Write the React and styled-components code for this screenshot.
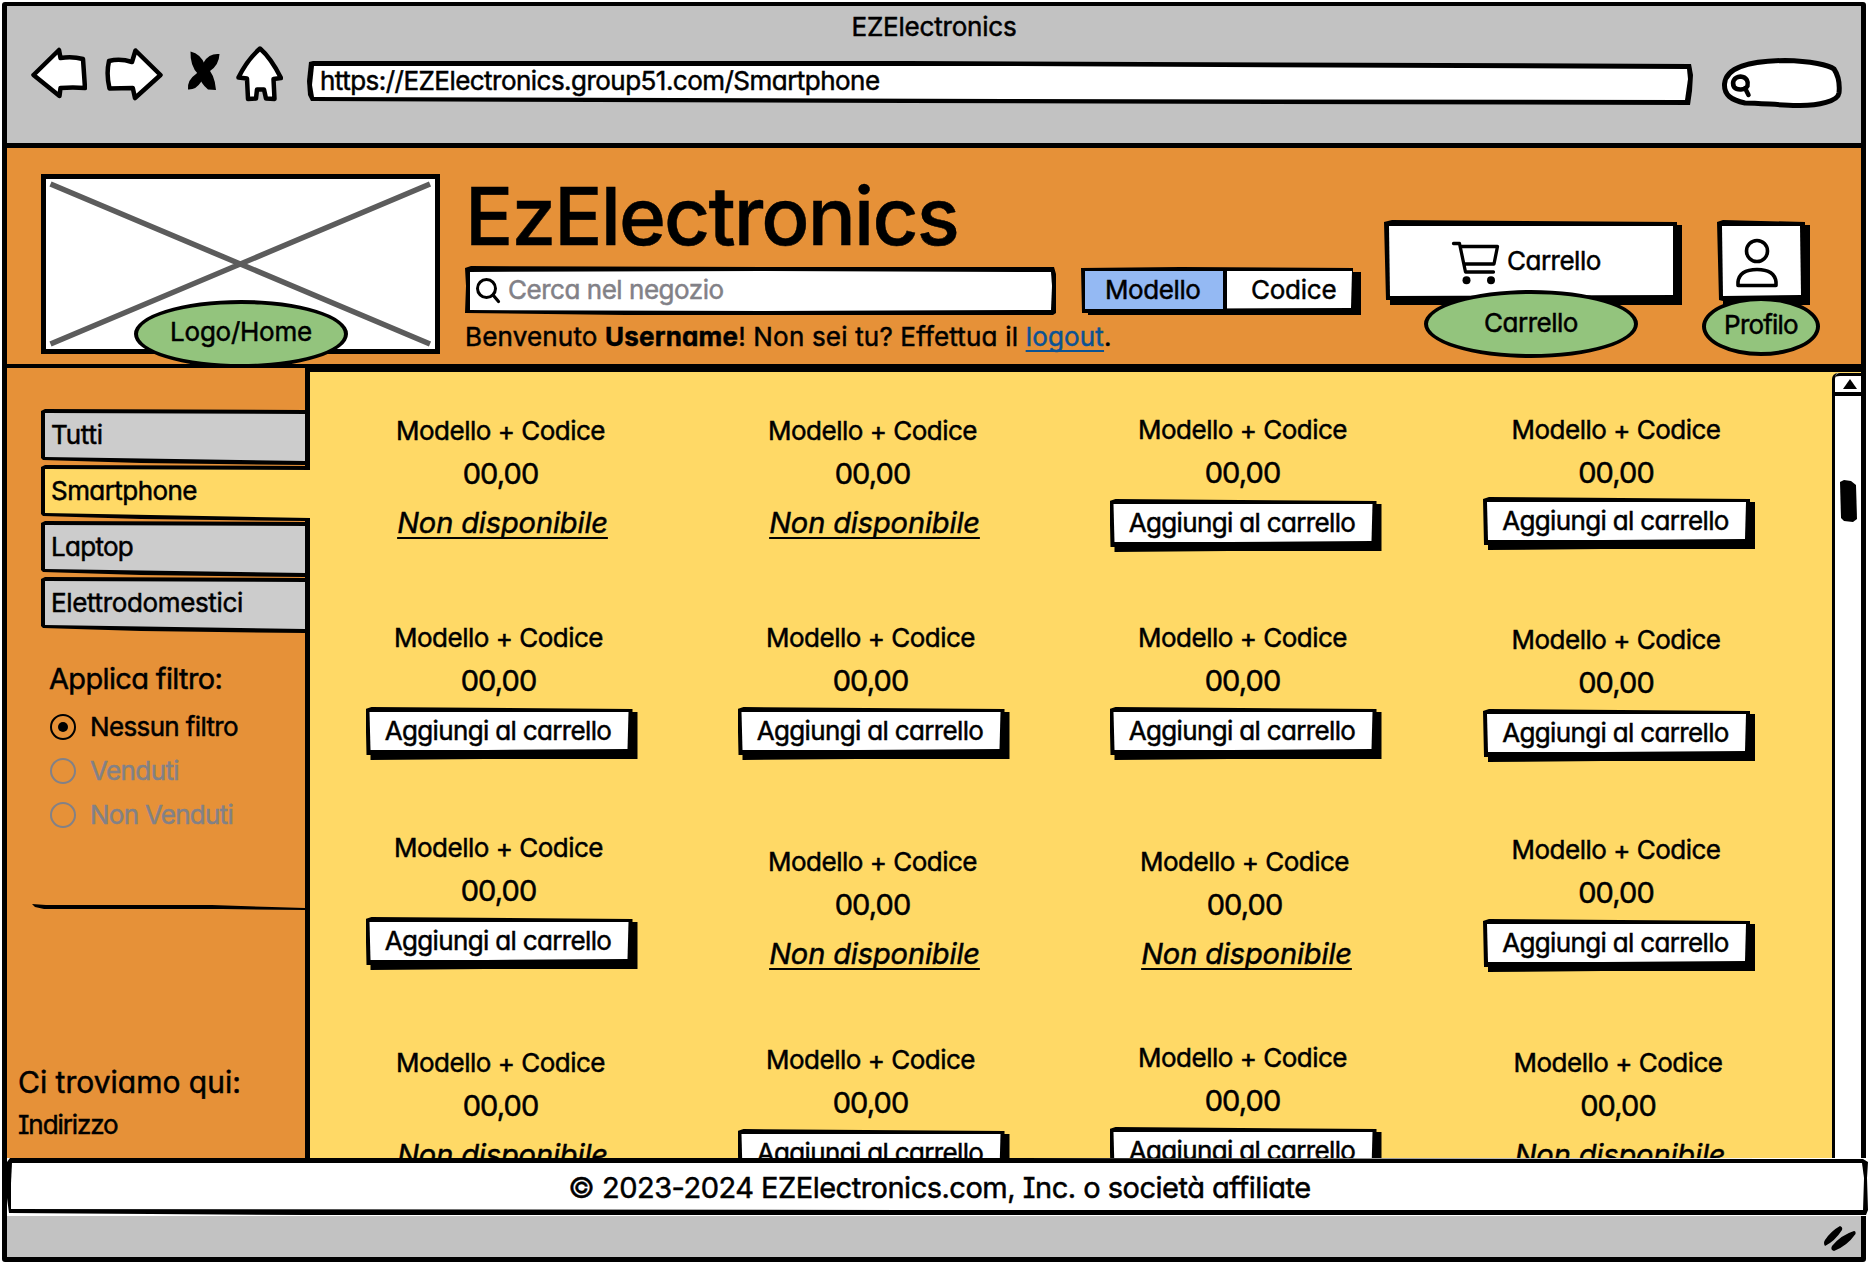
import React from "react";
import styled, { createGlobalStyle, css } from "styled-components";

const ink = "#000";
const orange = "#e69138";
const yellow = "#ffd966";
const green = "#93c47d";
const muted = "#828187";

const GlobalStyle = createGlobalStyle`
  * { box-sizing: border-box; }
  html, body { margin: 0; padding: 0; background: #fff; }
  body {
    font-family: Inter, Lato, "Liberation Sans", sans-serif;
    font-feature-settings: "cv08", "cv11";
    font-size: 26px;
    line-height: 32px;
    color: ${ink};
    overflow: hidden;
  }
`;

/* Hand-drawn box: an ink outline with a filled, slightly skewed face on top. */
const sketch = (outer, inner, fill) => css`
  position: relative;
  z-index: 0;
  &::before, &::after {
    content: "";
    position: absolute;
    inset: 0;
    z-index: -1;
  }
  &::before { background: ${ink}; clip-path: polygon(${outer}); }
  &::after { background: ${fill}; clip-path: polygon(${inner}); }
`;

const Text = styled.span`
  white-space: nowrap;
  letter-spacing: ${(p) => p.$ls || 0}px;
  -webkit-text-stroke: 0.5px currentColor;
`;

const Window = styled.div`
  width: 1864px;
  height: 1260px;
  margin: 2px;
  border: solid ${ink};
  border-width: 4px 5px 5px;
  border-radius: 3px;
  display: flex;
  flex-direction: column;
`;

const Chrome = styled.div`
  height: 142px;
  flex: none;
  background: #c2c2c2;
  border-bottom: 5px solid ${ink};
`;
const ChromeTitle = styled.div`
  padding-top: 5px;
  height: 40px;
  text-align: center;
`;
const ChromeRow = styled.div`
  display: flex;
  align-items: flex-start;
  padding-left: 24px;
`;
const Glyph = styled.svg`
  display: block;
  flex: none;
  margin-left: ${(p) => p.$gap || 0}px;
  margin-top: ${(p) => p.$drop || 0}px;
`;
const UrlBar = styled.div`
  ${sketch(
    "2px 1px, 6px 0, 600px 0, 1384px 3px, 1386px 14px, 1385px 30px, 1383px 44px, 600px 42px, 4px 40px, 1px 34px, 0 20px",
    "7px 5px, 700px 5px, 1380px 8px, 1381px 18px, 1378px 39px, 700px 38px, 7px 36px, 5px 24px",
    "#fff"
  )}
  width: 1386px;
  height: 45px;
  margin: 15px 0 0 24px;
  padding: 4px 0 0 13px;
`;

const Header = styled.header`
  height: 220px;
  flex: none;
  background: ${orange};
  border-bottom: 4px solid ${ink};
  display: flex;
  align-items: flex-start;
  padding-left: 34px;
`;
const LogoBox = styled.div`
  position: relative;
  width: 399px;
  height: 180px;
  margin-top: 26px;
  background: #fff;
  border: 5px solid ${ink};
  flex: none;
`;
const Bubble = styled.div`
  position: absolute;
  left: ${(p) => p.$x}px;
  top: ${(p) => p.$y}px;
  width: ${(p) => p.$w}px;
  height: ${(p) => p.$h}px;
  background: ${green};
  border: 4px solid ${ink};
  border-radius: 50%;
  display: flex;
  align-items: center;
  justify-content: center;
  padding-bottom: ${(p) => p.$lift || 0}px;
  z-index: 3;
`;
const HeaderCenter = styled.div`
  width: 897px;
  margin-left: 25px;
  padding-top: 28px;
  flex: none;
`;
const Brand = styled.h1`
  margin: 0;
  font-size: 80px;
  line-height: 80px;
  font-weight: 500;
`;
const SearchRow = styled.div`
  display: flex;
  margin-top: 10px;
`;
const SearchField = styled.div`
  ${sketch(
    "0 2px, 6px 0, 300px 1px, 589px 1px, 591px 8px, 591px 47px, 588px 49px, 300px 49px, 160px 49px, 0 47px, 1px 20px",
    "5px 6px, 300px 5px, 586px 6px, 587px 20px, 586px 44px, 300px 45px, 5px 44px",
    "#fff"
  )}
  width: 591px;
  height: 50px;
  display: flex;
  color: ${muted};
  padding-left: 9px;
`;
const SearchText = styled.div`
  padding: 8px 0 0 4px;
`;
const Toggle = styled.div`
  ${sketch(
    "0 1px, 100px 0, 272px 1px, 272px 5px, 280px 5px, 280px 48px, 7px 48px, 7px 46px, 1px 46px",
    "4px 4px, 271px 4px, 270px 41px, 4px 42px",
    "#fff"
  )}
  width: 280px;
  height: 48px;
  margin: 1px 0 0 25px;
  display: flex;
`;
const ToggleOption = styled.div`
  width: ${(p) => p.$w}px;
  height: 38px;
  margin: 4px 0 0 ${(p) => (p.$on ? 4 : 0)}px;
  padding-top: 3px;
  padding-left: ${(p) => p.$pad}px;
  background: ${(p) => (p.$on ? "#94b9f3" : "transparent")};
  border-right: ${(p) => (p.$on ? "4px solid #000" : "0")};
`;
const Welcome = styled.div`
  margin-top: 5px;
`;
const Logout = styled.a`
  color: #0b5394;
  text-decoration: underline;
  text-decoration-thickness: 2px;
  text-underline-offset: 4px;
  text-decoration-skip-ink: none;
`;
const CartButton = styled.div`
  ${sketch(
    "0 2px, 8px 0, 293px 2px, 293px 5px, 298px 5px, 298px 85px, 6px 85px, 6px 80px, 2px 80px",
    "5px 6px, 289px 6px, 289px 75px, 6px 76px",
    "#fff"
  )}
  width: 298px;
  height: 85px;
  margin: 72px 0 0 22px;
  padding: 21px 0 0 67px;
  display: flex;
  flex: none;
`;
const CartLabel = styled.div`
  padding: 4px 0 0 6px;
`;
const ProfileButton = styled.div`
  ${sketch(
    "0 2px, 6px 0, 88px 2px, 88px 5px, 93px 5px, 93px 85px, 6px 85px, 6px 81px, 2px 80px",
    "5px 6px, 83px 6px, 84px 75px, 6px 76px",
    "#fff"
  )}
  width: 93px;
  height: 85px;
  margin: 72px 0 0 35px;
  padding: 18px 0 0 18px;
  flex: none;
`;

const Main = styled.div`
  height: 790px;
  flex: none;
  display: flex;
  background: ${orange};
`;
const Sidebar = styled.aside`
  width: 298px;
  flex: none;
  padding-top: 41px;
`;
const Tab = styled.div`
  ${(p) =>
    p.$active
      ? sketch(
          "0 2px, 4px 0, 268px 1px, 268px 5px, 269px 5px, 269px 57px, 264px 56px, 100px 54px, 2px 51px, 0 49px",
          "4px 4px, 269px 5px, 269px 53px, 4px 48px",
          yellow
        )
      : sketch(
          "0 2px, 4px 0, 264px 1px, 264px 56px, 100px 54px, 2px 51px, 0 49px",
          "4px 4px, 264px 5px, 264px 52px, 4px 48px",
          "#ccc"
        )}
  width: ${(p) => (p.$active ? 269 : 264)}px;
  height: 56px;
  margin-left: 34px;
  padding: 10px 0 0 10px;
  z-index: ${(p) => (p.$active ? 1 : 0)};
`;
const FilterTitle = styled.div`
  margin: 28px 0 8px 42px;
  font-size: 29px;
  line-height: 36px;
`;
const RadioRow = styled.div`
  height: 44px;
  margin-left: 43px;
  display: flex;
  align-items: center;
  gap: 14px;
  color: ${(p) => (p.$off ? muted : ink)};
`;
const Radio = styled.span`
  width: 26px;
  height: 26px;
  border: 2.5px solid currentColor;
  border-radius: 50%;
  display: grid;
  place-items: center;
  &::after {
    content: "";
    width: 10px;
    height: 10px;
    border-radius: 50%;
    background: ${(p) => (p.$on ? "currentColor" : "transparent")};
  }
`;
const Rule = styled.div`
  height: 7px;
  margin: 67px 0 0 25px;
  background: ${ink};
  clip-path: polygon(0 0, 14px 1px, 180px 1px, 240px 3px, 273px 4px, 273px 6px, 190px 5px, 12px 5px, 3px 3px);
`;
const AddressTitle = styled.div`
  margin: 153px 0 0 11px;
  font-size: 30px;
  line-height: 36px;
`;
const Address = styled.div`
  margin: 9px 0 0 11px;
`;

const Content = styled.main`
  flex: 1;
  display: flex;
  background: ${yellow};
  border-top: 4px solid ${ink};
  border-left: 5px solid ${ink};
  overflow: hidden;
`;
const Grid = styled.div`
  width: 1522px;
  flex: none;
  padding: 42px 0 0 2px;
  display: grid;
  grid-template-columns: 373px 371px 373px 374px;
  grid-template-rows: 208px 210px 210px 210px;
`;
const Card = styled.div`
  display: flex;
  flex-direction: column;
  align-items: center;
  padding-top: ${(p) => p.$dy}px;
  padding-left: ${(p) => p.$dx * 2}px;
`;
const Price = styled.div`
  margin-top: 9px;
  font-size: 29px;
  line-height: 36px;
`;
const AddButton = styled.div`
  ${sketch(
    "0 2px, 6px 0, 267px 2px, 267px 5px, 272px 5px, 272px 52px, 120px 52px, 5px 53px, 5px 48px, 1px 48px",
    "4px 5px, 263px 5px, 262px 42px, 120px 43px, 5px 43px",
    "#fff"
  )}
  width: 272px;
  height: 53px;
  flex: none;
  margin: ${(p) => p.$top}px 0 0 6px;
  padding: 8px 7px 0 0;
  text-align: center;
`;
const Unavailable = styled.div`
  margin: 13px 0 0 4px;
  font-size: 29px;
  line-height: 36px;
  font-style: italic;
  text-decoration: underline;
  text-decoration-thickness: 2px;
  text-underline-offset: 4px;
  text-decoration-skip-ink: none;
`;
const Scrollbar = styled.div`
  width: 29px;
  margin-top: 1px;
  flex: none;
  background: #fff;
  border-left: 3px solid ${ink};
  border-top-left-radius: 6px;
`;
const ScrollUp = styled.div`
  height: 23px;
  border: solid ${ink};
  border-width: 3px 0 4px 0;
  border-top-left-radius: 5px;
  padding: 3px 0 0 7px;
`;
const Thumb = styled.div`
  width: 17px;
  height: 42px;
  margin: 84px 0 0 5px;
  background: ${ink};
  clip-path: polygon(0 2px, 4px 0, 11px 1px, 16px 5px, 17px 39px, 13px 42px, 4px 41px, 1px 38px);
`;

const Footer = styled.footer`
  ${sketch(
    "0 4px, 3px 0, 900px 0, 1856px 1px, 1861px 4px, 1860px 20px, 1861px 52px, 1859px 57px, 900px 57px, 300px 57px, 2px 55px, 0 40px",
    "5px 5px, 900px 5px, 1855px 5px, 1857px 20px, 1856px 52px, 900px 52px, 4px 51px, 4px 25px",
    "#fff"
  )}
  height: 58px;
  flex: none;
  margin-right: -7px;
  padding: 12px 0 0 4px;
  text-align: center;
  font-size: 29px;
  line-height: 36px;
  background: #fff;
`;
const StatusBar = styled.div`
  flex: 1;
  background: #c2c2c2;
  display: flex;
  justify-content: flex-end;
  padding: 9px 4px 0 0;
`;

const categories = [
  { name: "Tutti", ls: -0.2 },
  { name: "Smartphone", ls: -0.55 },
  { name: "Laptop", ls: -0.72 },
  { name: "Elettrodomestici", ls: -0.35 },
];
const filters = [
  { name: "Nessun filtro", ls: -0.64 },
  { name: "Venduti", ls: -0.6 },
  { name: "Non Venduti", ls: -0.74 },
];

/* Availability plus the horizontal and vertical jitter of each hand-placed card. */
const products = [
  { dx: 2, dy: 1 }, { dx: 2, dy: 1 }, { add: true }, { add: true, top: 6 },
  { add: true }, { add: true }, { add: true }, { add: true, dy: 2 },
  { add: true }, { dx: 2, dy: 14 }, { dx: 2, dy: 14 }, { add: true, dy: 2 },
  { dx: 2, dy: 5 }, { add: true, dy: 2 }, { add: true }, { dx: 2, dy: 5 },
];

const leaves = [
  "M190.500 51.500Q201 54 205 65Q215 74 216 90L208 89.500Q201 84 198 74Q190 66 190.500 51.500Z",
  "M219.500 54Q219 65 210 71Q206 76 201 82Q196 90 188 89.500Q187 80 196 74Q201 70 204 62Q209 53 219.500 54Z",
];

function Product({ item }) {
  return (
    <Card $dx={item.dx || 0} $dy={item.dy || 0}>
      <Text $ls={-0.5}>Modello + Codice</Text>
      <Price><Text $ls={-0.9}>00,00</Text></Price>
      {item.add ? (
        <AddButton $top={item.top || 8}><Text $ls={-0.65}>Aggiungi al carrello</Text></AddButton>
      ) : (
        <Unavailable><Text $ls={-0.12}>Non disponibile</Text></Unavailable>
      )}
    </Card>
  );
}

export default function App() {
  return (
    <>
      <GlobalStyle />
      <Window>
        <Chrome>
          <ChromeTitle><Text $ls={-0.2}>EZElectronics</Text></ChromeTitle>
          <ChromeRow>
            <Glyph width="56" height="56" viewBox="31 46 56 56">
              <path d="M33.500 75L59 50L60.500 58Q72 56 83 59Q84 73 85 88Q73 87 60.500 88L59.500 96Z" fill="#fff" stroke="#000" strokeWidth="4.500" strokeLinejoin="round" />
            </Glyph>
            <Glyph $gap={18} width="58" height="57" viewBox="105 46 58 57">
              <path d="M109 61Q120 58 132 62L135.500 50.500L160.500 75L135 98L132.800 88L109.500 88.500Q106 74 109 61Z" fill="#fff" stroke="#000" strokeWidth="4.500" strokeLinejoin="round" />
            </Glyph>
            <Glyph $gap={24} width="33" height="48" viewBox="187 46 33 48">
              {leaves.map((d) => <path key={d} d={d} />)}
            </Glyph>
            <Glyph $gap={16} width="47" height="57" viewBox="236 46 47 57">
              <path d="M260 48.500Q271 58 281 78L273.500 79Q274 89 274.500 99L266 98.500L264 89.500H257L256 98.500L248 99L247 78.500L238.500 77.500Q247 60 260 48.500Z" fill="#fff" stroke="#000" strokeWidth="4.500" strokeLinejoin="round" />
            </Glyph>
            <UrlBar><Text $ls={-0.53}>https://EZElectronics.group51.com/Smartphone</Text></UrlBar>
            <Glyph $gap={28} $drop={10} width="122" height="54" viewBox="1722 55 122 54">
              <path d="M1725.500 83C1727 66 1750 60 1786 59.500C1812 60 1830 64 1835 68C1839 74 1841 82 1840 92C1839 100 1820 105 1798 104.500C1778 104 1760 102 1746 102C1732 99 1725 94 1725.500 83Z" fill="#fff" stroke="#000" strokeWidth="5" />
              <path d="M1741.500 75.500C1748 76 1749.500 81 1748.500 85C1746 89.500 1738 89.500 1735 86C1732.500 81 1735 76 1741.500 75.500ZM1746 87L1749.500 94" fill="none" stroke="#000" strokeWidth="4.500" strokeLinecap="round" />
            </Glyph>
          </ChromeRow>
        </Chrome>

        <Header>
          <LogoBox>
            <svg width="389" height="170" viewBox="46 179 389 170" style={{ display: "block" }}>
              <path d="M50.500 184L430 344M430 184L50.500 344" stroke="#5c5c5c" strokeWidth="5.500" fill="none" />
            </svg>
            <Bubble $x={88} $y={121} $w={214} $h={68} $lift={4}><Text $ls={-0.25}>Logo/Home</Text></Bubble>
          </LogoBox>
          <HeaderCenter>
            <Brand><Text $ls={-1.85}>EzElectronics</Text></Brand>
            <SearchRow>
              <SearchField>
                <Glyph $drop={8} width="30" height="34" viewBox="474 274 30 34">
                  <ellipse cx="486.500" cy="288.500" rx="9" ry="9" fill="none" stroke="#000" strokeWidth="3" />
                  <path d="M493 295L498.500 301.500" stroke="#000" strokeWidth="3.200" strokeLinecap="round" />
                </Glyph>
                <SearchText><Text $ls={-0.47}>Cerca nel negozio</Text></SearchText>
              </SearchField>
              <Toggle>
                <ToggleOption $on $w={142} $pad={20}><Text $ls={-0.4}>Modello</Text></ToggleOption>
                <ToggleOption $w={126} $pad={24}><Text $ls={-0.25}>Codice</Text></ToggleOption>
              </Toggle>
            </SearchRow>
            <Welcome>
              <Text $ls={0.18}>Benvenuto <b>Username</b>! Non sei tu? Effettua il <Logout>logout</Logout>.</Text>
            </Welcome>
          </HeaderCenter>
          <CartButton>
            <Glyph width="50" height="46" viewBox="1450 241 50 46">
              <path d="M1452.500 243.500H1458.500L1464.500 272H1492.500M1459.500 246.500H1496.500L1493 264H1463" fill="none" stroke="#000" strokeWidth="3.300" strokeLinecap="round" strokeLinejoin="round" />
              <circle cx="1465.500" cy="280.300" r="4" /><circle cx="1490" cy="280.300" r="4" />
            </Glyph>
            <CartLabel><Text $ls={-0.5}>Carrello</Text></CartLabel>
            <Bubble $x={40} $y={70} $w={214} $h={68} $lift={3}><Text $ls={-0.5}>Carrello</Text></Bubble>
          </CartButton>
          <ProfileButton>
            <Glyph width="44" height="50" viewBox="1735 238 44 50">
              <ellipse cx="1757" cy="251" rx="10.500" ry="10.500" fill="none" stroke="#000" strokeWidth="3.600" />
              <path d="M1738 285.500V282C1739 273 1746 269.500 1757 269.500S1775 273 1776 282V285.500Z" fill="none" stroke="#000" strokeWidth="3.600" strokeLinejoin="round" />
            </Glyph>
            <Bubble $x={-15} $y={77} $w={118} $h={59} $lift={4}><Text $ls={-0.8}>Profilo</Text></Bubble>
          </ProfileButton>
        </Header>

        <Main>
          <Sidebar>
            {categories.map((c) => (
              <Tab key={c.name} $active={c.name === "Smartphone"}><Text $ls={c.ls}>{c.name}</Text></Tab>
            ))}
            <FilterTitle><Text $ls={-0.65}>Applica filtro:</Text></FilterTitle>
            {filters.map((f, i) => (
              <RadioRow key={f.name} $off={i > 0}>
                <Radio $on={i === 0} /><Text $ls={f.ls}>{f.name}</Text>
              </RadioRow>
            ))}
            <Rule />
            <AddressTitle><Text>Ci troviamo qui:</Text></AddressTitle>
            <Address><Text $ls={-1.1}>Indirizzo</Text></Address>
          </Sidebar>
          <Content>
            <Grid>
              {products.map((item, i) => <Product key={i} item={item} />)}
            </Grid>
            <Scrollbar>
              <ScrollUp>
                <svg width="16" height="11" viewBox="0 0 16 11" style={{ display: "block" }}><path d="M8 0L15 10H1Z" /></svg>
              </ScrollUp>
              <Thumb />
            </Scrollbar>
          </Content>
        </Main>

        <Footer><Text $ls={-0.5}>© 2023-2024 EZElectronics.com, Inc. o società affiliate</Text></Footer>
        <StatusBar>
          <svg width="34" height="28" viewBox="1824 1225 34 28">
            <path d="M1841 1226Q1844 1227 1843 1230Q1836 1241 1826 1246Q1824 1243 1826 1240Q1832 1231 1841 1226ZM1855 1231Q1857 1231 1856.500 1234Q1848 1246 1835 1251Q1831 1250 1833 1246Q1842 1235 1855 1231Z" />
          </svg>
        </StatusBar>
      </Window>
    </>
  );
}
